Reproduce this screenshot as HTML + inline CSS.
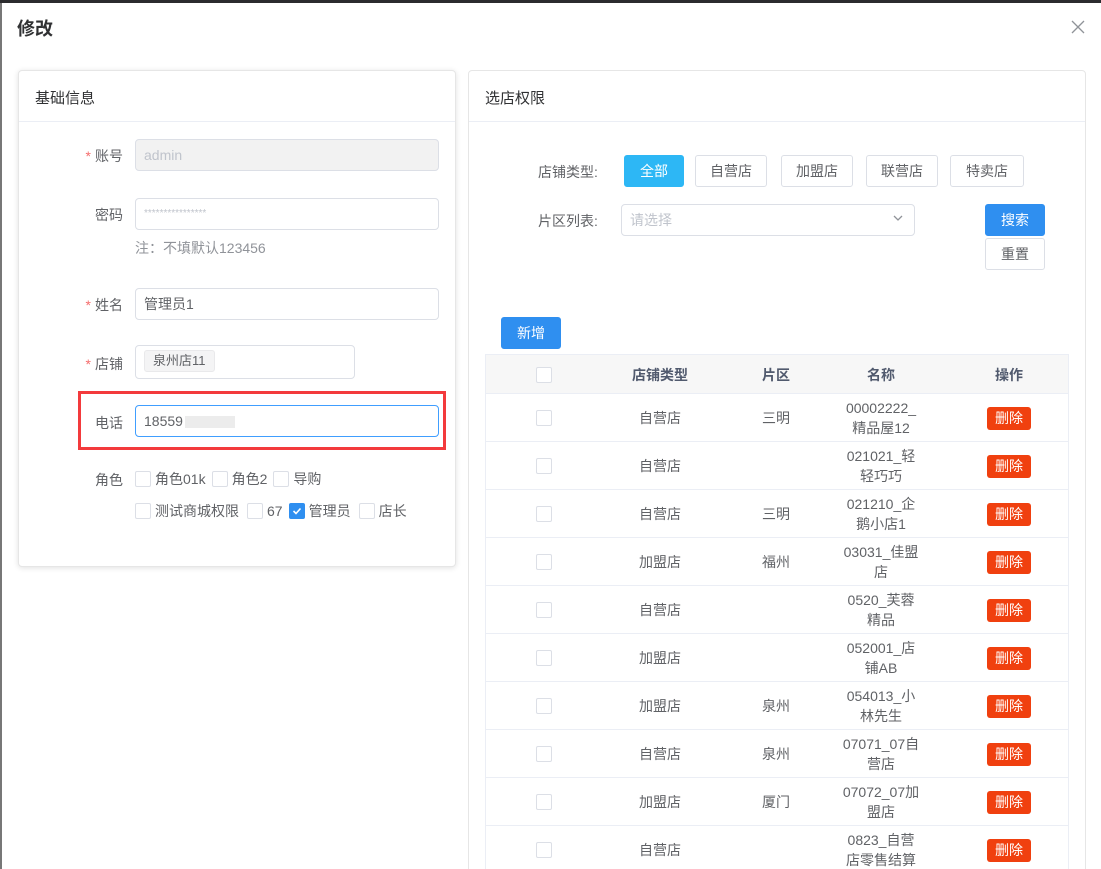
<!DOCTYPE html>
<html style="overflow:hidden;height:869px"><head><meta charset="utf-8"><style>
*{box-sizing:border-box;margin:0;padding:0}
body{width:1101px;height:869px;overflow:hidden;background:#fff;font-family:"Liberation Sans","Noto Sans CJK SC",sans-serif;color:#606266;font-size:14px;position:relative}
.a{position:absolute}
.topbar{left:0;top:0;width:1101px;height:3px;background:#2b2b2e}
.lstrip{left:0;top:3px;width:2px;height:866px;background:#777}
.card{border:1px solid #e6e6e6;border-radius:4px;background:#fff}
.hd{font-size:15px;color:#303133}
.lbl{text-align:right;width:60px;font-size:14px;color:#606266}
.req:before{content:"*";color:#f56c6c;margin-right:4px}
.inp{border:1px solid #dcdfe6;border-radius:4px;height:32px;font-size:14px;line-height:30px;padding-left:8px;color:#606266}
.btn{border:1px solid #dcdfe6;border-radius:3px;height:32px;line-height:30px;text-align:center;font-size:14px;color:#606266;background:#fff}
.cb{width:16px;height:16px;border:1px solid #dcdfe6;border-radius:2px;background:#fff}
.ck{display:inline-flex;align-items:center;margin-right:6px}
.ck .cb{margin-right:4px}
.row{left:485px;width:584px;height:48px;border-bottom:1px solid #ebeef5;border-left:1px solid #ebeef5;border-right:1px solid #ebeef5}
.c{position:absolute;text-align:center;font-size:14px;color:#606266;line-height:20px}
.del{position:absolute;left:501px;top:13px;width:44px;height:23px;background:#f0400f;color:#fff;border-radius:3px;font-size:14px;line-height:23px;text-align:center}
</style></head><body>
<div class="a topbar"></div>
<div class="a lstrip"></div>
<div class="a" style="left:17px;top:15px;font-size:18px;font-weight:bold;color:#303133">修改</div>
<svg class="a" style="left:1071px;top:20px" width="14" height="14" viewBox="0 0 14 14"><path d="M1 1L13 13M13 1L1 13" stroke="#909399" stroke-width="1.3"/></svg>

<div class="a card" style="left:18px;top:70px;width:438px;height:497px;box-shadow:0 1px 6px rgba(0,0,0,.12)"></div>
<div class="a hd" style="left:35px;top:87px">基础信息</div>
<div class="a" style="left:19px;top:121px;width:436px;height:1px;background:#ebeef5"></div>

<div class="a lbl req" style="left:63px;top:146px">账号</div>
<div class="a inp" style="left:135px;top:139px;width:304px;background:#f2f2f2;color:#c0c4cc">admin</div>
<div class="a lbl" style="left:63px;top:205px">密码</div>
<div class="a inp" style="left:135px;top:198px;width:304px;color:#c0c4cc;font-size:10px">****************</div>
<div class="a" style="left:135px;top:238px;color:#909399">注：不填默认123456</div>
<div class="a lbl req" style="left:63px;top:295px">姓名</div>
<div class="a inp" style="left:135px;top:288px;width:304px">管理员1</div>
<div class="a lbl req" style="left:63px;top:354px">店铺</div>
<div class="a inp" style="left:135px;top:345px;width:220px;height:34px"><span style="display:inline-block;background:#f4f4f5;border:1px solid #e9e9eb;border-radius:3px;height:22px;line-height:20px;font-size:13px;padding:0 8px;margin-top:4px;vertical-align:top">泉州店11</span></div>
<div class="a" style="left:78px;top:391px;width:368px;height:59px;border:3px solid #f33a3c"></div>
<div class="a lbl" style="left:63px;top:413px">电话</div>
<div class="a inp" style="left:135px;top:405px;width:304px;border-color:#409eff">18559<span style="display:inline-block;width:50px;height:12px;background:#ececec;vertical-align:middle;margin-left:2px"></span></div>
<div class="a lbl" style="left:63px;top:470px">角色</div>
<div class="a" style="left:135px;top:469px;display:flex"><span class="ck"><span class="cb"></span>角色01k</span><span class="ck"><span class="cb"></span>角色2</span><span class="ck"><span class="cb"></span>导购</span></div>
<div class="a" style="left:135px;top:501px;display:flex"><span class="ck" style="margin-right:8px"><span class="cb"></span>测试商城权限</span><span class="ck" style="margin-right:6px"><span class="cb"></span>67</span><span class="ck" style="margin-right:8px"><span class="cb" style="background:#2f8ff0;border-color:#2f8ff0;position:relative"><svg width="14" height="14" style="position:absolute;left:0;top:0"><path d="M3.5 7L6 9.5L10.5 4.5" stroke="#fff" stroke-width="1.6" fill="none"/></svg></span>管理员</span><span class="ck"><span class="cb"></span>店长</span></div>

<div class="a card" style="left:468px;top:70px;width:618px;height:810px"></div>
<div class="a hd" style="left:485px;top:87px">选店权限</div>
<div class="a" style="left:469px;top:121px;width:616px;height:1px;background:#ebeef5"></div>

<div class="a" style="left:538px;top:162px">店铺类型:</div>
<div class="a btn" style="left:624px;top:155px;width:60px;background:#2db7f5;border-color:#2db7f5;color:#fff">全部</div>
<div class="a btn" style="left:695px;top:155px;width:72px">自营店</div>
<div class="a btn" style="left:781px;top:155px;width:72px">加盟店</div>
<div class="a btn" style="left:866px;top:155px;width:72px">联营店</div>
<div class="a btn" style="left:950px;top:155px;width:74px">特卖店</div>
<div class="a" style="left:538px;top:211px">片区列表:</div>
<div class="a inp" style="left:621px;top:204px;width:294px;color:#c0c4cc">请选择</div>
<svg class="a" style="left:893px;top:214px" width="10" height="8"><path d="M1 2L5 6L9 2" stroke="#909399" stroke-width="1.3" fill="none"/></svg>
<div class="a btn" style="left:985px;top:204px;width:60px;background:#2f8ff0;border-color:#2f8ff0;color:#fff">搜索</div>
<div class="a btn" style="left:985px;top:238px;width:60px">重置</div>
<div class="a btn" style="left:501px;top:317px;width:60px;background:#2f8ff0;border-color:#2f8ff0;color:#fff">新增</div>

<div class="a" style="left:485px;top:354px;width:584px;height:40px;background:#f7f7f7;border:1px solid #ebeef5">
<div class="a cb" style="left:50px;top:12px"></div>
<div class="c" style="left:118px;width:112px;top:10px;font-weight:bold;color:#515a6e">店铺类型</div>
<div class="c" style="left:241px;width:98px;top:10px;font-weight:bold;color:#515a6e">片区</div>
<div class="c" style="left:345px;width:100px;top:10px;font-weight:bold;color:#515a6e">名称</div>
<div class="c" style="left:473px;width:100px;top:10px;font-weight:bold;color:#515a6e">操作</div>
</div>

<div class="a row" style="top:394px"><div class="a cb" style="left:50px;top:16px"></div><div class="c" style="left:118px;width:112px;top:14px">自营店</div><div class="c" style="left:241px;width:98px;top:14px">三明</div><div class="c" style="left:345px;width:100px;top:4px">00002222_<br>精品屋12</div><div class="del">删除</div></div>
<div class="a row" style="top:442px"><div class="a cb" style="left:50px;top:16px"></div><div class="c" style="left:118px;width:112px;top:14px">自营店</div><div class="c" style="left:241px;width:98px;top:14px"></div><div class="c" style="left:345px;width:100px;top:4px">021021_轻<br>轻巧巧</div><div class="del">删除</div></div>
<div class="a row" style="top:490px"><div class="a cb" style="left:50px;top:16px"></div><div class="c" style="left:118px;width:112px;top:14px">自营店</div><div class="c" style="left:241px;width:98px;top:14px">三明</div><div class="c" style="left:345px;width:100px;top:4px">021210_企<br>鹅小店1</div><div class="del">删除</div></div>
<div class="a row" style="top:538px"><div class="a cb" style="left:50px;top:16px"></div><div class="c" style="left:118px;width:112px;top:14px">加盟店</div><div class="c" style="left:241px;width:98px;top:14px">福州</div><div class="c" style="left:345px;width:100px;top:4px">03031_佳盟<br>店</div><div class="del">删除</div></div>
<div class="a row" style="top:586px"><div class="a cb" style="left:50px;top:16px"></div><div class="c" style="left:118px;width:112px;top:14px">自营店</div><div class="c" style="left:241px;width:98px;top:14px"></div><div class="c" style="left:345px;width:100px;top:4px">0520_芙蓉<br>精品</div><div class="del">删除</div></div>
<div class="a row" style="top:634px"><div class="a cb" style="left:50px;top:16px"></div><div class="c" style="left:118px;width:112px;top:14px">加盟店</div><div class="c" style="left:241px;width:98px;top:14px"></div><div class="c" style="left:345px;width:100px;top:4px">052001_店<br>铺AB</div><div class="del">删除</div></div>
<div class="a row" style="top:682px"><div class="a cb" style="left:50px;top:16px"></div><div class="c" style="left:118px;width:112px;top:14px">加盟店</div><div class="c" style="left:241px;width:98px;top:14px">泉州</div><div class="c" style="left:345px;width:100px;top:4px">054013_小<br>林先生</div><div class="del">删除</div></div>
<div class="a row" style="top:730px"><div class="a cb" style="left:50px;top:16px"></div><div class="c" style="left:118px;width:112px;top:14px">自营店</div><div class="c" style="left:241px;width:98px;top:14px">泉州</div><div class="c" style="left:345px;width:100px;top:4px">07071_07自<br>营店</div><div class="del">删除</div></div>
<div class="a row" style="top:778px"><div class="a cb" style="left:50px;top:16px"></div><div class="c" style="left:118px;width:112px;top:14px">加盟店</div><div class="c" style="left:241px;width:98px;top:14px">厦门</div><div class="c" style="left:345px;width:100px;top:4px">07072_07加<br>盟店</div><div class="del">删除</div></div>
<div class="a row" style="top:826px"><div class="a cb" style="left:50px;top:16px"></div><div class="c" style="left:118px;width:112px;top:14px">自营店</div><div class="c" style="left:241px;width:98px;top:14px"></div><div class="c" style="left:345px;width:100px;top:4px">0823_自营<br>店零售结算</div><div class="del">删除</div></div>
</body></html>
